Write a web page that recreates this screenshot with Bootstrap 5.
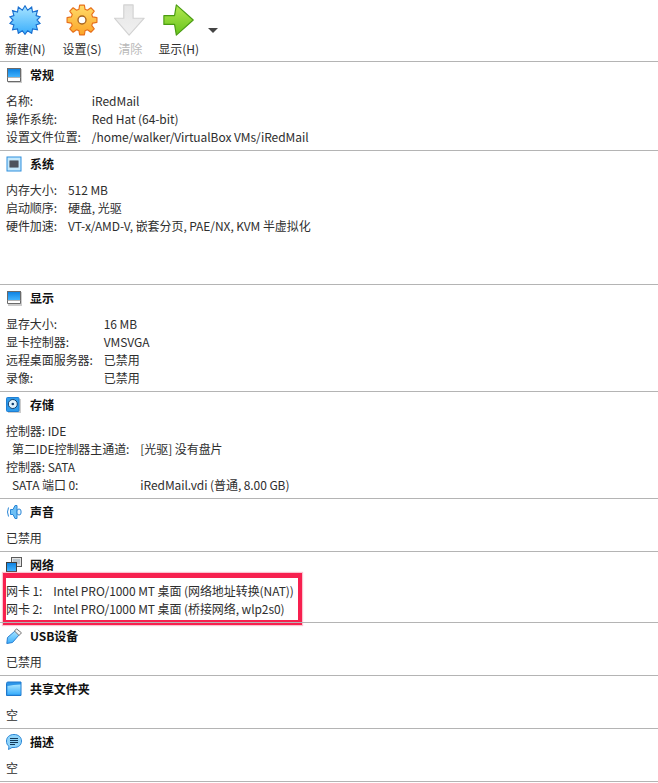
<!DOCTYPE html>
<html lang="zh-CN">
<head>
  <meta charset="UTF-8" />
  <meta name="viewport" content="width=device-width, initial-scale=1" />
  <title>iRedMail</title>
  <link href="https://cdn.jsdelivr.net/npm/bootstrap@5.3.0/dist/css/bootstrap.min.css" rel="stylesheet" />
  <style>
    body { font-family: "Noto Sans CJK SC", "Noto Sans", sans-serif; font-size: 12px; line-height: 18px; letter-spacing: -0.07px; color: #2e2e2e; background: #fff; }
    .tool-bar { height: 61px; padding-left: 5px; gap: 13px; }
    .tool-btn { min-width: 32px; }
    .tool-btn:first-child { margin-right: 4px; }
    .tool-btn:nth-child(4) { margin-left: -1px; }
    .tool-btn svg { display: block; width: 32px; height: 32px; margin-top: 4px; }
    .tool-btn span { margin-top: 4px; white-space: nowrap; }
    .tool-off { color: #b9b9b9; }
    .tool-caret { width: 0; height: 0; border-left: 5px solid transparent; border-right: 5px solid transparent; border-top: 5px solid #444; margin: 28px 0 0 -4px; }
    .info-sec { position: relative; border-top: 1px solid #b4b4b4; padding: 0 0 4px 6px; }
    .info-last { border-bottom: 1px solid #b4b4b4; }
    .sec-head { height: 26px; margin-bottom: 4px; gap: 8px; font-weight: 700; color: #111; }
    .sec-head svg { width: 16px; height: 16px; flex: none; }
    .info-grid { display: grid; grid-template-columns: max-content 1fr; column-gap: 11px; }
    .info-indent { padding-left: 6px; }
    .tall-sec { height: 134px; }
    .red-box { position: absolute; left: 3px; top: 21px; width: 299px; height: 52px; border-style: solid; border-color: #f7204f; border-width: 5px 4px 5px 3px; box-shadow: 0 0 1px 1px #fbc4d0; pointer-events: none; }
  </style>
</head>
<body>
<svg width="0" height="0" class="position-absolute">
  <defs>
    <linearGradient id="gBlue" x1="0" y1="0" x2="0" y2="1"><stop offset="0" stop-color="#a8e4ff" /><stop offset="1" stop-color="#3aaefc" /></linearGradient>
    <linearGradient id="gScreen" x1="0" y1="0" x2="0" y2="1"><stop offset="0" stop-color="#0b7fe0" /><stop offset="1" stop-color="#45b6ff" /></linearGradient>
    <linearGradient id="gOrange" x1="0" y1="0" x2="0" y2="1"><stop offset="0" stop-color="#ffdc6a" /><stop offset="1" stop-color="#fba428" /></linearGradient>
    <linearGradient id="gGrey" x1="0" y1="0" x2="0" y2="1"><stop offset="0" stop-color="#e6e6e6" /><stop offset="1" stop-color="#f0f0f0" /></linearGradient>
    <linearGradient id="gGreen" x1="0" y1="0" x2="0" y2="1"><stop offset="0" stop-color="#b4e850" /><stop offset="1" stop-color="#66c41c" /></linearGradient>
  </defs>
</svg>

<div class="tool-bar d-flex">
  <div class="tool-btn d-flex flex-column align-items-center">
    <svg viewBox="0 0 36 36"><polygon points="18,2 21,7 25.500,3.500 26.500,9 32,7.500 30.500,13 35,14.500 31.500,18 35,22 30.500,23.500 32,29 26.500,28 25.500,33 21,30 18,34 15,30 10.500,33 9.500,28 4,29 5.500,23.500 1,22 4.500,18 1,14.500 5.500,13 4,7.500 9.500,9 10.500,3.500 15,7" fill="url(#gBlue)" stroke="#1a6fd0" stroke-width="1.300" /></svg>
    <span>新建(N)</span>
  </div>
  <div class="tool-btn d-flex flex-column align-items-center">
    <svg viewBox="0 0 36 36"><polygon points="14.550,6 15.340,1.200 20.660,1.200 21.450,6 24.050,7.070 28,4.240 31.760,8 28.930,11.950 30,14.550 34.800,15.340 34.800,20.660 30,21.450 28.930,24.050 31.760,28 28,31.760 24.050,28.930 21.450,30 20.660,34.800 15.340,34.800 14.550,30 11.950,28.930 8,31.760 4.240,28 7.070,24.050 6,21.450 1.200,20.660 1.200,15.340 6,14.550 7.070,11.950 4.240,8 8,4.240 11.950,7.070" fill="url(#gOrange)" stroke="#e8701a" stroke-width="1.300" stroke-linejoin="round" /><circle cx="18" cy="18" r="4.500" fill="#fff" stroke="#a8641e" stroke-width="1.500" /></svg>
    <span>设置(S)</span>
  </div>
  <div class="tool-btn tool-off d-flex flex-column align-items-center">
    <svg viewBox="0 0 36 36"><path d="M11 1h10.500v15h12.500L17 35 .5 16H11z" fill="url(#gGrey)" stroke="#d2d2d2" stroke-width="1.300" stroke-linejoin="round" /></svg>
    <span>清除</span>
  </div>
  <div class="tool-btn d-flex flex-column align-items-center">
    <svg viewBox="0 0 36 36"><path d="M1 13h12L15 1l19 17-19 17-2-12H1z" fill="url(#gGreen)" stroke="#4a9c12" stroke-width="1.300" stroke-linejoin="round" /></svg>
    <span>显示(H)</span>
  </div>
  <div class="tool-caret"></div>
</div>

<div class="info-sec">
  <div class="sec-head d-flex align-items-center">
    <svg viewBox="0 0 16 16"><rect x="2" y="2" width="14" height="14" fill="#ccc" /><rect x="1.500" y="1.500" width="13" height="9" fill="url(#gScreen)" stroke="#6a6a6a" /><path d="M1.500 10.500v4h13v-4" fill="#fff" stroke="#6a6a6a" /></svg>
    <span>常规</span>
  </div>
  <div class="info-grid">
    <span>名称:</span><span>iRedMail</span>
    <span>操作系统:</span><span>Red Hat (64-bit)</span>
    <span>设置文件位置:</span><span>/home/walker/VirtualBox VMs/iRedMail</span>
  </div>
</div>

<div class="info-sec tall-sec">
  <div class="sec-head d-flex align-items-center">
    <svg viewBox="0 0 16 16"><rect x="1" y="1" width="14" height="14" fill="#c4e8fc" stroke="#2f8fdd" /><rect x="3.500" y="4.500" width="9" height="7" fill="#3a3f46" /><path d="M3.500 6h9M3.500 8h9M3.500 10h9" stroke="#8892a0" stroke-width=".5" /></svg>
    <span>系统</span>
  </div>
  <div class="info-grid">
    <span>内存大小:</span><span>512 MB</span>
    <span>启动顺序:</span><span>硬盘, 光驱</span>
    <span>硬件加速:</span><span>VT-x/AMD-V, 嵌套分页, PAE/NX, KVM 半虚拟化</span>
  </div>
</div>

<div class="info-sec">
  <div class="sec-head d-flex align-items-center">
    <svg viewBox="0 0 16 16"><rect x="2" y="2" width="14" height="14" fill="#ccc" /><rect x="1.500" y="1.500" width="13" height="9" fill="url(#gScreen)" stroke="#6a6a6a" /><path d="M1.500 10.500v3h13v-3" fill="#fff" stroke="#6a6a6a" /></svg>
    <span>显示</span>
  </div>
  <div class="info-grid">
    <span>显存大小:</span><span>16 MB</span>
    <span>显卡控制器:</span><span>VMSVGA</span>
    <span>远程桌面服务器:</span><span>已禁用</span>
    <span>录像:</span><span>已禁用</span>
  </div>
</div>

<div class="info-sec">
  <div class="sec-head d-flex align-items-center">
    <svg viewBox="0 0 16 16"><rect x="2" y="2" width="13" height="14" fill="#ccc" /><rect x=".5" y=".5" width="12.500" height="14" rx="1" fill="#2d9bec" stroke="#1f7fd4" /><circle cx="6.800" cy="7" r="4.500" fill="#e0f2fd" stroke="#123f6e" /><circle cx="6.800" cy="7" r="1.300" fill="#123f6e" /></svg>
    <span>存储</span>
  </div>
  <div class="info-grid">
    <span>控制器: IDE</span><span></span>
    <span class="info-indent">第二IDE控制器主通道:</span><span>[光驱] 没有盘片</span>
    <span>控制器: SATA</span><span></span>
    <span class="info-indent">SATA 端口 0:</span><span>iRedMail.vdi (普通, 8.00 GB)</span>
  </div>
</div>

<div class="info-sec">
  <div class="sec-head d-flex align-items-center">
    <svg viewBox="0 0 16 16"><path d="M4.500 5.500 H7 L9 1.500 H11 V14.500 H9 L7 10.500 H4.500 Z" fill="#6ec0f5" stroke="#2a86d6" /><path d="M2.500 3.500 Q.5 8 2.500 12.500" fill="none" stroke="#2a86d6" /><rect x="11" y="5" width="4" height="6" rx="2" fill="#e6f4fd" stroke="#2a86d6" /></svg>
    <span>声音</span>
  </div>
  <div>已禁用</div>
</div>

<div class="info-sec">
  <div class="sec-head d-flex align-items-center">
    <svg viewBox="0 0 16 16"><rect x="5.500" y=".5" width="10" height="9" fill="#e4e4e4" stroke="#5a5a5a" /><rect x="7" y="2" width="7" height="5" fill="#b9c4cc" /><rect x=".5" y="5.500" width="10" height="9" fill="url(#gScreen)" stroke="#3d3d3d" /></svg>
    <span>网络</span>
  </div>
  <div class="info-grid">
    <span>网卡 1:</span><span>Intel PRO/1000 MT 桌面 (网络地址转换(NAT))</span>
    <span>网卡 2:</span><span>Intel PRO/1000 MT 桌面 (桥接网络, wlp2s0)</span>
  </div>
  <div class="red-box"></div>
</div>

<div class="info-sec">
  <div class="sec-head d-flex align-items-center">
    <svg viewBox="0 0 16 16"><path d="M.8 15.500 L1.500 9.500 L9 3 L13 7 L6.500 14.500 Z" fill="url(#gBlue)" stroke="#2a7fd0" /><path d="M10.500 .8 L15.500 4.800 L13 7.500 L8.500 3 Z" fill="#f2f2f2" stroke="#777" /></svg>
    <span>USB设备</span>
  </div>
  <div>已禁用</div>
</div>

<div class="info-sec">
  <div class="sec-head d-flex align-items-center">
    <svg viewBox="0 0 16 16"><path d="M.5 2.500 Q.5 1 2 1 H15 V14.500 H.5 Z" fill="#2d95e8" stroke="#1f78cc" /><path d="M1.500 5 Q7 3.500 14.500 3.500 V13.500 H1.500 Z" fill="url(#gBlue)" /></svg>
    <span>共享文件夹</span>
  </div>
  <div>空</div>
</div>

<div class="info-sec info-last">
  <div class="sec-head d-flex align-items-center">
    <svg viewBox="0 0 16 16"><path d="M8 .5 C12.500 .5 15.500 3.200 15.500 7 C15.500 11 12.500 13.500 8 13.500 H6 L2.500 15.500 L3 12.500 C1.300 11.300 .5 9.300 .5 7 C.5 3.200 3.500 .5 8 .5 Z" fill="#8fd4fa" stroke="#2a86d6" /><path d="M4 4.500h8M4 6.500h8M4 8.500h8M4 10.500h5" stroke="#123a5a" /></svg>
    <span>描述</span>
  </div>
  <div>空</div>
</div>

<script src="https://cdn.jsdelivr.net/npm/bootstrap@5.3.0/dist/js/bootstrap.bundle.min.js"></script>
</body>
</html>
